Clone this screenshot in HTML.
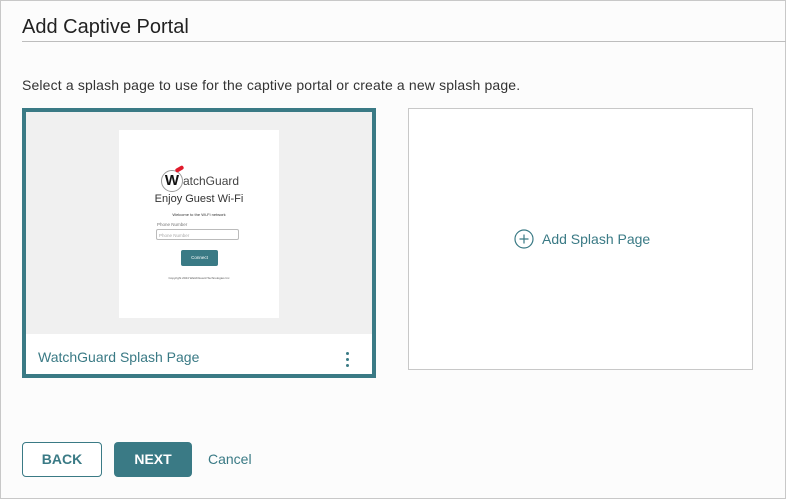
<!DOCTYPE html>
<html><head><style>
body{margin:0;width:786px;height:499px;background:#fcfcfc;font-family:"Liberation Sans",sans-serif;position:relative;overflow:hidden}
.frame{position:absolute;left:0;top:0;width:784px;height:497px;border:1px solid #c8c8c8}
.abs{position:absolute}
</style></head><body>
<div class="frame"></div>
<div class="abs" style="left:22px;top:16px;font-size:20px;color:#222">Add Captive Portal</div>
<div class="abs" style="left:22px;top:41px;width:764px;height:1px;background:#bdbdbd"></div>
<div class="abs" style="left:22px;top:77px;font-size:14px;color:#333;letter-spacing:0.15px">Select a splash page to use for the captive portal or create a new splash page.</div>

<div class="abs" style="left:22px;top:108px;width:346px;height:262px;border:4px solid #3a7a85;background:#fff">
  <div class="abs" style="left:0;top:0;width:346px;height:222px;background:#f0f0f0"></div>
  <div class="abs" style="left:93px;top:18px;width:160px;height:188px;background:#fff">
    <div class="abs" style="left:42px;top:40px;width:20px;height:20px;border:1px solid #999;border-radius:50%;font:bold 15px 'Liberation Sans';text-align:center;line-height:20px;color:#111">W</div>
    <div class="abs" style="left:56px;top:37px;width:9px;height:4px;background:#e01a2b;border-radius:2px;transform:rotate(-30deg)"></div>
    <div class="abs" style="left:64px;top:44px;font-size:12px;color:#444">atchGuard</div>
    <div class="abs" style="left:0;width:160px;top:63px;text-align:center;font-size:11px;color:#333">Enjoy Guest Wi-Fi</div>
    <div class="abs" style="left:0;width:160px;top:82px;text-align:center;font-size:4px;color:#333">Welcome to the Wi-Fi network</div>
    <div class="abs" style="left:38px;top:92px;font-size:4.5px;color:#777">Phone Number</div>
    <div class="abs" style="left:37px;top:99px;width:83px;height:11px;border:1px solid #bbb;border-radius:2px;font-size:4.5px;color:#aaa;line-height:11px;padding-left:2px;box-sizing:border-box">Phone Number</div>
    <div class="abs" style="left:62px;top:120px;width:37px;height:16px;background:#3a7a85;border-radius:2px;color:#fff;font-size:4.5px;text-align:center;line-height:16px">Connect</div>
    <div class="abs" style="left:0;width:160px;top:146px;text-align:center;font-size:3px;color:#555">Copyright 2024 WatchGuard Technologies Inc</div>
  </div>
  <div class="abs" style="left:12px;top:237px;font-size:14px;color:#3a7a85">WatchGuard Splash Page</div>
  <div class="abs" style="left:320px;top:240px;width:4px">
    <div style="width:3px;height:3px;border-radius:50%;background:#3a7a85;margin-bottom:3px"></div>
    <div style="width:3px;height:3px;border-radius:50%;background:#3a7a85;margin-bottom:3px"></div>
    <div style="width:3px;height:3px;border-radius:50%;background:#3a7a85"></div>
  </div>
</div>

<div class="abs" style="left:408px;top:108px;width:343px;height:260px;border:1px solid #c8c8c8;background:#fff"></div>
<svg class="abs" style="left:514px;top:229px" width="20" height="20" viewBox="0 0 20 20"><circle cx="10" cy="10" r="9" fill="none" stroke="#3a7a85" stroke-width="1.2"/><path d="M10 5.5v9M5.5 10h9" stroke="#3a7a85" stroke-width="1.2"/></svg>
<div class="abs" style="left:542px;top:231px;font-size:14px;color:#3a7a85">Add Splash Page</div>

<div class="abs" style="left:22px;top:442px;width:80px;height:35px;border:1px solid #3a7a85;border-radius:4px;box-sizing:border-box;background:#fff;color:#3a7a85;font-weight:bold;font-size:14px;text-align:center;line-height:33px">BACK</div>
<div class="abs" style="left:114px;top:442px;width:78px;height:35px;border-radius:4px;background:#3a7a85;color:#fff;font-weight:bold;font-size:14px;text-align:center;line-height:35px">NEXT</div>
<div class="abs" style="left:208px;top:451px;font-size:14px;color:#3a7a85">Cancel</div>
</body></html>
